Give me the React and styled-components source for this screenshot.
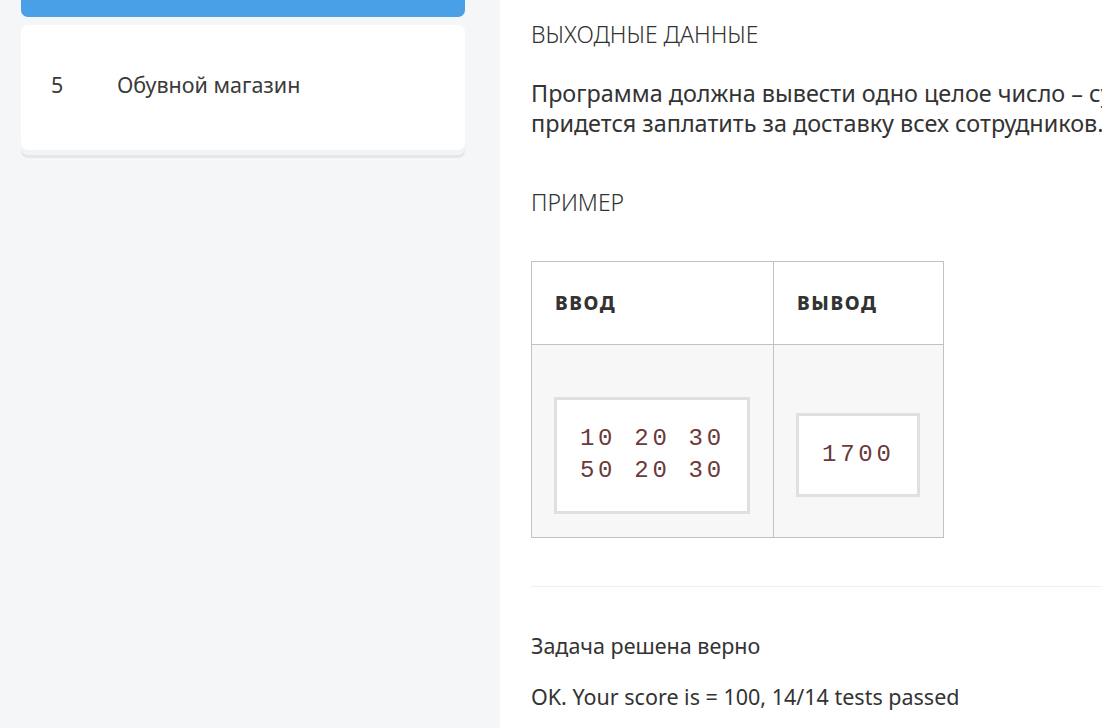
import React from "react";
import styled, { createGlobalStyle } from "styled-components";

const GlobalStyle = createGlobalStyle`
  html, body {
    margin: 0;
    padding: 0;
    background: #fff;
  }
  body {
    font-family: "Noto Sans", "Open Sans", sans-serif;
    color: #333;
  }
`;

const Page = styled.div`
  display: grid;
  grid-template-columns: 500px 1fr;
  height: 728px;
  overflow: hidden;
`;

const Sidebar = styled.aside`
  background: #f5f6f8;
  padding: 0 35px 0 21px;
  display: flex;
  flex-direction: column;
  gap: 8px;
`;

const ActiveCard = styled.div`
  height: 17px;
  background: #4aa0e6;
  border-radius: 0 0 7px 7px;
`;

const TaskCard = styled.div`
  display: flex;
  align-items: center;
  height: 125px;
  padding: 0 30px 6px;
  box-sizing: border-box;
  background: #fff;
  border-radius: 7px;
  box-shadow: 0 5px 0 #f2f3f4, 0 8px 0 #e5e6e7;
  font-size: 21.5px;
  color: #3a3a3a;
`;

const TaskNum = styled.span`
  width: 66px;
`;

const Main = styled.main`
  padding: 16px 0 0 31px;
  display: flex;
  flex-direction: column;
  overflow: hidden;
`;

const SectionTitle = styled.h3`
  margin: 0;
  font-weight: 300;
  font-size: 23px;
  color: #333;
  line-height: 36px;
`;

const Paragraph = styled.p`
  margin: 26px 0 0;
  font-size: 23.4px;
  line-height: 30px;
  white-space: nowrap;
  color: #333;
`;

const ExampleTitle = styled(SectionTitle)`
  margin-top: 46px;
`;

const Table = styled.table`
  margin-top: 41px;
  border-collapse: collapse;
  width: 413px;
`;

const HeadCell = styled.th`
  border: 1px solid #c2c2c2;
  height: 82px;
  padding: 0 0 0 23px;
  text-align: left;
  font-size: 19px;
  font-weight: 800;
  letter-spacing: 1.6px;
  color: #333;
  width: ${(p) => p.$w}px;
`;

const BodyCell = styled.td`
  border: 1px solid #c2c2c2;
  height: 192px;
  padding: 0 0 0 22px;
  background: #f7f7f7;
  vertical-align: middle;
`;

const CodeBox = styled.pre`
  display: inline-block;
  margin: 28px 0 0;
  padding: ${(p) => p.$pad};
  background: #fff;
  border: 3px solid #e0e0e0;
  font-family: "Liberation Mono", "DejaVu Sans Mono", monospace;
  font-size: 24px;
  line-height: 32px;
  letter-spacing: 3.7px;
  color: #6b3a3a;
`;

const Divider = styled.hr`
  margin: 48px 0 0;
  border: none;
  border-top: 1px solid #f0f0f0;
`;

const Verdict = styled.p`
  margin: 44px 0 0;
  font-size: 21.5px;
  line-height: 30px;
  color: #333;
`;

const Score = styled(Verdict)`
  margin-top: 21px;
`;

export default function App() {
  return (
    <>
      <GlobalStyle />
      <Page>
        <Sidebar>
          <ActiveCard />
          <TaskCard>
            <TaskNum>5</TaskNum>
            Обувной магазин
          </TaskCard>
        </Sidebar>
        <Main>
          <SectionTitle>ВЫХОДНЫЕ ДАННЫЕ</SectionTitle>
          <Paragraph>
            Программа должна вывести одно целое число – сумму, которую
            <br />
            придется заплатить за доставку всех сотрудников.
          </Paragraph>
          <ExampleTitle>ПРИМЕР</ExampleTitle>
          <Table>
            <thead>
              <tr>
                <HeadCell $w={242}>ВВОД</HeadCell>
                <HeadCell $w={170}>ВЫВОД</HeadCell>
              </tr>
            </thead>
            <tbody>
              <tr>
                <BodyCell>
                  <CodeBox $pad="23.5px 22px 23.5px 23px">{"10 20 30\n50 20 30"}</CodeBox>
                </BodyCell>
                <BodyCell>
                  <CodeBox $pad="23px 22px 23px 23px">1700</CodeBox>
                </BodyCell>
              </tr>
            </tbody>
          </Table>
          <Divider />
          <Verdict>Задача решена верно</Verdict>
          <Score>OK. Your score is = 100, 14/14 tests passed</Score>
        </Main>
      </Page>
    </>
  );
}
